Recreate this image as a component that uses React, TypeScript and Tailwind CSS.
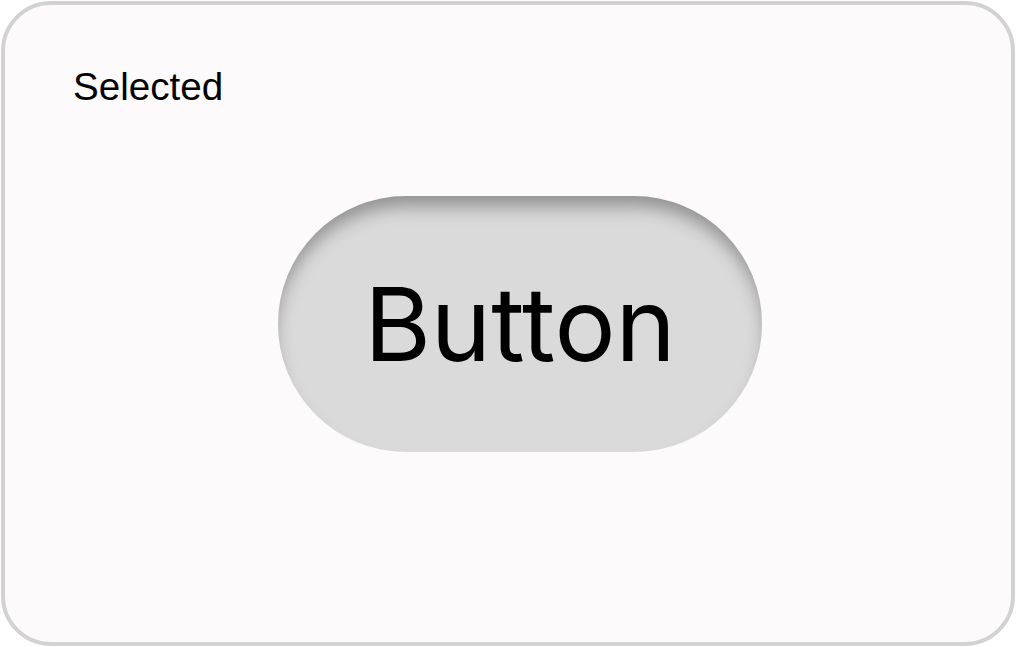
export default function App() {
  return (
    <div className="h-[647px] w-[1016px] bg-white p-px">
      <div className="flex h-[645px] w-[1014px] flex-col rounded-[50px] border-[4px] border-[#d2d2d2] bg-[#fcfafb] pl-[68px] pt-[62px] font-['Liberation_Sans',Arial,sans-serif] text-black">
        <div className="text-[38.6px] leading-[39px]">Selected</div>
        <div className="ml-[205px] mt-[90px] flex h-[256px] w-[484px] items-center justify-center rounded-full bg-[#dadada] shadow-[inset_0_14px_18px_-4px_rgba(0,0,0,0.34)]">
          <span className="font-['Inter',sans-serif] text-[102px] leading-none">Button</span>
        </div>
      </div>
    </div>
  );
}
